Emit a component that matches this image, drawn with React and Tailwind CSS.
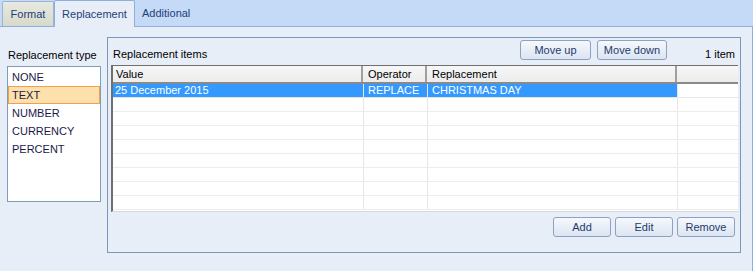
import React from 'react';

const TYPES = ['NONE', 'TEXT', 'NUMBER', 'CURRENCY', 'PERCENT'];
const ROWS = [{ value: '25 December 2015', op: 'REPLACE', rep: 'CHRISTMAS DAY' }];

function Btn({ children, className = '' }) {
  return (
    <button
      className={`h-[20px] rounded-[3px] border border-[#8da2c2] bg-gradient-to-b from-[#f6f8fc] to-[#dce5f2] text-[11px] leading-none text-[#1e3b6e] ${className}`}
    >
      {children}
    </button>
  );
}

export default function App() {
  const blank = Array.from({ length: 8 });
  return (
    <div className="w-[753px] h-[271px] bg-[#e8eef8] flex flex-col overflow-hidden text-[11px] text-black" style={{ fontFamily: '"Liberation Sans", Arial, sans-serif' }}>
      {/* tab strip */}
      <div className="h-[27px] shrink-0 bg-[#c4daf7] border-b border-[#8eaedb] flex items-end pl-[2px]">
        <div className="h-[25px] w-[52px] flex items-center justify-center border border-b-0 border-[#9db3d0] rounded-t-[2px] bg-gradient-to-b from-[#e8e9e1] to-[#d6dacb] text-[#1e3f78]">
          Format
        </div>
        <div className="h-[27px] -mb-px w-[81px] flex items-center justify-center border border-b-0 border-[#8eaedb] rounded-t-[2px] bg-[#e8eef8] text-[#1e3f78]">
          Replacement
        </div>
        <div className="h-[25px] px-[7px] flex items-center text-[#1e3f78]">Additional</div>
      </div>

      {/* body */}
      <div className="flex-1 flex pl-[7px] pr-[11px] pt-[10px] border-r border-[#8eaedb]">
        {/* left list */}
        <div className="w-[94px] shrink-0 flex flex-col">
          <div className="h-[20px] mt-[8px] pl-[1px] leading-[20px] whitespace-nowrap">Replacement type</div>
          <div className="h-[136px] mt-[1px] border border-[#7f9db9] bg-white pt-[1px]">
            {TYPES.map((t) => (
              <div
                key={t}
                className={`h-[18px] leading-[16px] pl-[3px] text-[#1a1a4a] ${t === 'TEXT' ? 'bg-[#fde0ac] border border-[#f0a050]' : 'border border-transparent'}`}
              >
                {t}
              </div>
            ))}
          </div>
        </div>

        {/* group */}
        <div className="ml-[6px] w-[634px] h-[216px] border border-[#7a96b8] flex flex-col px-[3px]">
          <div className="h-[27px] shrink-0 flex items-center">
            <div className="pl-[2px] mt-[5px]">Replacement items</div>
            <div className="ml-auto flex gap-[6px] self-start mt-[2px]">
              <Btn className="w-[71px]">Move up</Btn>
              <Btn className="w-[70px]">Move down</Btn>
            </div>
            <div className="w-[70px] text-right pr-[2px] mt-[5px]">1 item</div>
          </div>

          {/* grid */}
          <div className="h-[147px] w-[627px] bg-white border-l-2 border-t border-[#6f6f6f] border-b-[#d8d8d8] border-b flex flex-col">
            <div className="h-[18px] shrink-0 flex bg-gradient-to-b from-[#f7f7f7] to-[#ececec] border-b-2 border-[#8a8a8a]">
              <div className="w-[250px] pl-[3px] leading-[16px] border-r-2 border-[#a0a0a0]">Value</div>
              <div className="w-[64px] pl-[5px] leading-[16px] border-r-2 border-[#a0a0a0]">Operator</div>
              <div className="w-[250px] pl-[5px] leading-[16px] border-r-2 border-[#a0a0a0]">Replacement</div>
              <div className="flex-1" />
            </div>
            {ROWS.map((r) => (
              <div key={r.value} className="h-[14px] flex border-b border-[#e6e6e6]">
                <div className="w-[251px] pl-[2px] leading-[13px] bg-[#3399ff] text-white border-r border-[#e6e6e6]">{r.value}</div>
                <div className="w-[64px] pl-[4px] leading-[13px] bg-[#3399ff] text-white border-r border-[#e6e6e6]">{r.op}</div>
                <div className="w-[250px] pl-[4px] leading-[13px] bg-[#3399ff] text-white border-r border-[#e6e6e6]">{r.rep}</div>
                <div className="flex-1" />
              </div>
            ))}
            {blank.map((_, i) => (
              <div key={i} className="h-[14px] flex border-b border-[#ececec]">
                <div className="w-[251px] border-r border-[#e6e6e6]" />
                <div className="w-[64px] border-r border-[#e6e6e6]" />
                <div className="w-[250px] border-r border-[#e6e6e6]" />
                <div className="flex-1" />
              </div>
            ))}
          </div>

          <div className="flex justify-end gap-[4px] mt-[5px] pr-[2px]">
            <Btn className="w-[58px]">Add</Btn>
            <Btn className="w-[58px]">Edit</Btn>
            <Btn className="w-[58px]">Remove</Btn>
          </div>
        </div>
      </div>
    </div>
  );
}
